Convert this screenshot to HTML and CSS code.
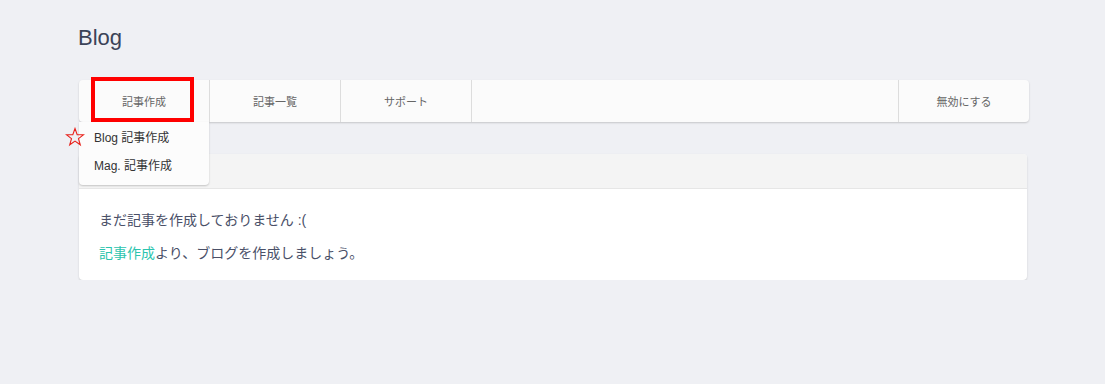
FILE: index.html
```html
<!DOCTYPE html>
<html>
<head>
    <title>Blog</title>
    <link rel="stylesheet" href="styles.css">
</head>
<body>
    <div class="page">
        <h1 class="page-title">Blog</h1>

        <div class="tabs">
            <div class="tab tab-create">
                記事作成
                <span class="highlight-box"></span>
                <div class="dropdown">
                    <svg class="star" width="20" height="20" viewBox="0 0 20 20">
                        <polygon points="10,1.5 12.2,7.6 18.6,7.7 13.5,11.6 15.3,17.8 10,14.1 4.7,17.8 6.5,11.6 1.4,7.7 7.8,7.6" fill="none" stroke="#e8201a" stroke-width="1.1"/>
                    </svg>
                    <a class="dropdown-item" href="#">Blog 記事作成</a>
                    <a class="dropdown-item" href="#">Mag. 記事作成</a>
                </div>
            </div>
            <div class="tab">記事一覧</div>
            <div class="tab">サポート</div>
            <div class="tab-spacer"></div>
            <div class="tab tab-last">無効にする</div>
        </div>

        <div class="card">
            <div class="card-header"></div>
            <div class="card-body">
                <p>まだ記事を作成しておりません :(</p>
                <p><a class="link" href="#">記事作成</a>より、ブログを作成しましょう。</p>
            </div>
        </div>
    </div>
</body>
</html>
```
FILE: styles.css
```css
body {
    margin: 0;
    background-color: #EFF0F4;
    font-family: "Liberation Sans", "Noto Sans CJK JP", sans-serif;
}

.page {
    width: 950px;
    margin-left: 79px;
}

.page-title {
    margin: 25px 0 29px -1px;
    font-size: 22px;
    line-height: 26px;
    font-weight: normal;
    color: #3B4358;
}

.tabs {
    display: flex;
    height: 42px;
    background-color: #FBFBFB;
    border-radius: 4px;
    box-shadow: 0px 1px 2px rgba(0, 0, 0, 0.18);
}

.tab {
    position: relative;
    width: 130px;
    display: flex;
    align-items: center;
    justify-content: center;
    font-size: 11px;
    color: #666;
    border-right: 1px solid #DDD;
}

.tab-spacer {
    flex: 1;
}

.tab-last {
    width: 130px;
    border-right: none;
    border-left: 1px solid #DDD;
}

.highlight-box {
    position: absolute;
    left: 12px;
    top: -3px;
    width: 103px;
    height: 45px;
    border: 4px solid #FF0000;
    box-sizing: border-box;
}

.dropdown {
    position: absolute;
    left: 0;
    top: 42px;
    width: 130px;
    padding: 2px 0 5px;
    background-color: #FCFCFC;
    border-radius: 0 0 4px 4px;
    box-shadow: 0px 1px 2px rgba(0, 0, 0, 0.2);
    z-index: 2;
}

.dropdown-item {
    display: block;
    height: 28px;
    line-height: 28px;
    padding-left: 15px;
    font-size: 12px;
    color: #333;
    text-decoration: none;
}

.star {
    position: absolute;
    left: -14px;
    top: 5px;
}

.card {
    margin-top: 32px;
    margin-right: 2px;
    background-color: #fff;
    border-radius: 4px;
    box-shadow: 0px 1px 2px rgba(0, 0, 0, 0.15);
    overflow: hidden;
}

.card-header {
    height: 34px;
    background-color: #F4F4F4;
    border-bottom: 1px solid #E6E6E6;
}

.card-body {
    padding: 21px 20px 17px;
    font-size: 14px;
    line-height: 20px;
    color: #4A5068;
}

.card-body p {
    margin: 0;
}

.card-body p + p {
    margin-top: 13px;
}

.link {
    color: #2CC4AE;
    text-decoration: none;
}
```
